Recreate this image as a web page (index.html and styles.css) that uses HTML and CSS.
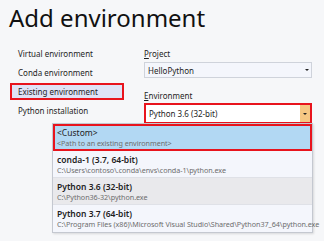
FILE: index.html
```html
<!DOCTYPE html>
<html>
<head>
<meta charset="UTF-8">
  <title>Add environment</title>
  <link rel="stylesheet" href="styles.css">
</head>
<body>
  <h1 class="title">Add environment</h1>

  <div class="layout">
    <ul class="nav">
      <li>Virtual environment</li>
      <li>Conda environment</li>
      <li class="active">Existing environment</li>
      <li>Python installation</li>
    </ul>

    <div class="form">
      <div class="field-label"><u>P</u>roject</div>
      <div class="select">
        <span>HelloPython</span>
        <span class="arrow"></span>
      </div>

      <div class="field-label env-label"><u>E</u>nvironment</div>
      <div class="select open">
        <span>Python 3.6 (32-bit)</span>
        <span class="arrow"></span>
      </div>
    </div>
  </div>

  <div class="popup">
    <div class="option custom">
      <div class="name">&lt;Custom&gt;</div>
      <div class="path">&lt;Path to an existing environment&gt;</div>
    </div>
    <div class="option">
      <div class="name">conda-1 (3.7, 64-bit)</div>
      <div class="path">C:\Users\contoso\.conda\envs\conda-1\python.exe</div>
    </div>
    <div class="option current">
      <div class="name">Python 3.6 (32-bit)</div>
      <div class="path">C:\Python36-32\python.exe</div>
    </div>
    <div class="option">
      <div class="name">Python 3.7 (64-bit)</div>
      <div class="path">C:\Program Files (x86)\Microsoft Visual Studio\Shared\Python37_64\python.exe</div>
    </div>
  </div>
</body>
</html>
```

FILE: styles.css
```css
body {
  margin: 0;
  width: 324px;
  height: 241px;
  overflow: hidden;
  background: #f6f7f9;
  color: #1e1e1e;
  font-family: "Noto Sans", "Open Sans", sans-serif;
  font-size: 8px;
  position: relative;
}

.title {
  margin: 0;
  padding: 2px 0 0 9px;
  font-size: 24px;
  font-weight: 400;
  line-height: 32px;
  color: #111;
}

.layout {
  display: flex;
  padding-top: 11px;
}

/* left navigation */
.nav {
  list-style: none;
  margin: 0;
  padding: 0 0 0 10px;
  width: 134px;
  box-sizing: border-box;
}

.nav li {
  height: 17px;
  line-height: 17px;
  margin-bottom: 2px;
  padding-left: 8px;
  margin-right: 10px;
  box-sizing: border-box;
}

.nav li.active {
  background: #dfe3f6;
  border: 2px solid #e8141d;
  padding-left: 6px;
  line-height: 13px;
}

/* form on the right */
.form {
  width: 168px;
  padding-left: 10px;
}

.field-label {
  height: 13px;
  line-height: 13px;
  margin-top: 2px;
  color: #1e1e1e;
}

.env-label {
  margin-top: 11px;
}

.select {
  display: flex;
  align-items: center;
  height: 16px;
  margin-top: 2px;
  background: #f4f6fc;
  border: 1px solid #cfd3db;
  box-sizing: border-box;
  padding-left: 3px;
}

.select span:first-child {
  flex: 1;
}

.arrow {
  width: 9px;
  height: 100%;
  display: flex;
  align-items: center;
  justify-content: center;
}

.arrow::after {
  content: "";
  border-left: 2px solid transparent;
  border-right: 2px solid transparent;
  border-top: 2px solid #222;
}

.select.open {
  height: 21px;
  margin-top: 1px;
  background: #fff;
  border: 2px solid #e8141d;
}

.select.open .arrow {
  background: #f6c783;
  width: 10px;
}

/* dropdown list lies over the page */
.popup {
  position: absolute;
  left: 52px;
  top: 123px;
  width: 261px;
  background: #f4f6fc;
  border: 1px solid #c4c8d0;
  box-sizing: border-box;
  box-shadow: 1px 1px 2px rgba(0, 0, 0, 0.12);
}

.option {
  height: 27px;
  padding: 3px 0 0 4px;
  box-sizing: border-box;
  border-bottom: 1px solid #dfe1e7;
  white-space: nowrap;
}

.option:last-child {
  border-bottom: none;
}

.option .name {
  line-height: 11px;
  font-size: 8.5px;
  font-weight: 600;
  color: #1e1e1e;
}

.option .path {
  line-height: 11px;
  font-size: 7.2px;
  letter-spacing: -0.05px;
  color: #6d6d6d;
}

.option.custom {
  background: #b2d8f3;
  border: 2px solid #e8141d;
  padding: 1px 0 0 2px;
}

.option.custom .name {
  font-weight: 400;
}

.option.current {
  background: #e9e9ec;
}
```
